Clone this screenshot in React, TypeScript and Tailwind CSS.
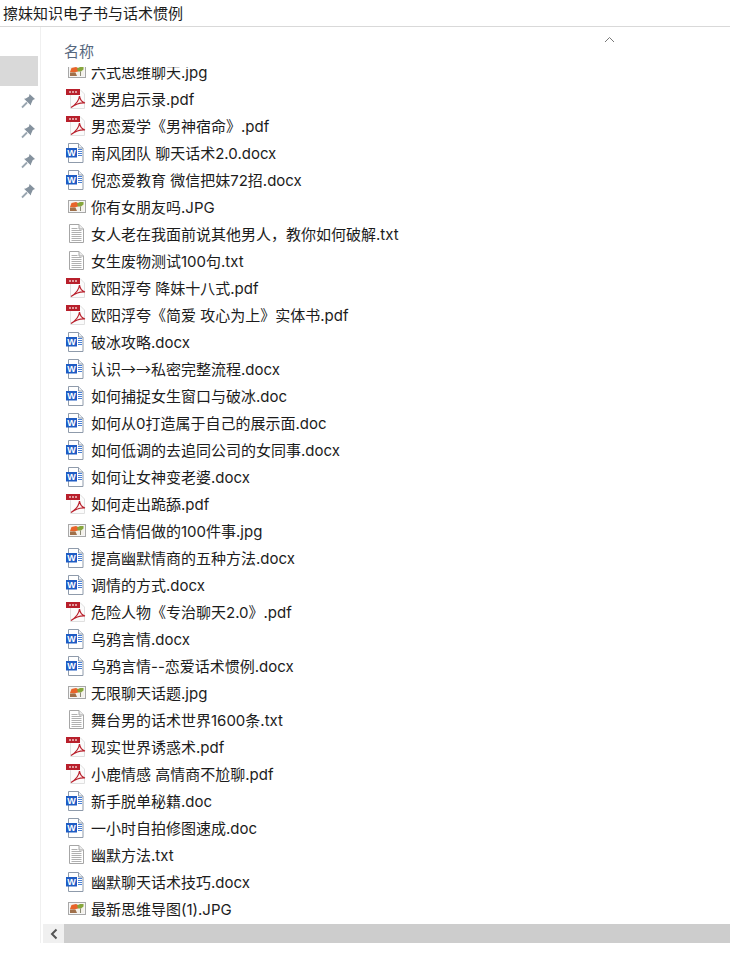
const FILES: [string, string][] = [
  ["jpg", "六式思维聊天.jpg"],
  ["pdf", "迷男启示录.pdf"],
  ["pdf", "男恋爱学《男神宿命》.pdf"],
  ["word", "南风团队 聊天话术2.0.docx"],
  ["word", "倪恋爱教育 微信把妹72招.docx"],
  ["jpg", "你有女朋友吗.JPG"],
  ["txt", "女人老在我面前说其他男人，教你如何破解.txt"],
  ["txt", "女生废物测试100句.txt"],
  ["pdf", "欧阳浮夸 降妹十八式.pdf"],
  ["pdf", "欧阳浮夸《简爱 攻心为上》实体书.pdf"],
  ["word", "破冰攻略.docx"],
  ["word", "认识→→私密完整流程.docx"],
  ["word", "如何捕捉女生窗口与破冰.doc"],
  ["word", "如何从0打造属于自己的展示面.doc"],
  ["word", "如何低调的去追同公司的女同事.docx"],
  ["word", "如何让女神变老婆.docx"],
  ["pdf", "如何走出跪舔.pdf"],
  ["jpg", "适合情侣做的100件事.jpg"],
  ["word", "提高幽默情商的五种方法.docx"],
  ["word", "调情的方式.docx"],
  ["pdf", "危险人物《专治聊天2.0》.pdf"],
  ["word", "乌鸦言情.docx"],
  ["word", "乌鸦言情--恋爱话术惯例.docx"],
  ["jpg", "无限聊天话题.jpg"],
  ["txt", "舞台男的话术世界1600条.txt"],
  ["pdf", "现实世界诱惑术.pdf"],
  ["pdf", "小鹿情感 高情商不尬聊.pdf"],
  ["word", "新手脱单秘籍.doc"],
  ["word", "一小时自拍修图速成.doc"],
  ["txt", "幽默方法.txt"],
  ["word", "幽默聊天话术技巧.docx"],
  ["jpg", "最新思维导图(1).JPG"],
];

function FileIcon({ type }: { type: string }) {
  if (type === "jpg") {
    return (
      <svg width="20" height="20" viewBox="0 0 20 20">
        <rect x="1.5" y="3.5" width="17" height="12" fill="#f6f6f6" stroke="#a8a8a8" />
        <rect x="3" y="5" width="14" height="9" fill="#f4f1ea" />
        <path d="M3 10 L4.5 6 L9 5 L12 6.5 L11 9.5 L7 10.5 Z" fill="#e8642a" />
        <path d="M10 6.5 L13 5 H16.5 V7.5 L14 9.5 L11 9.5 Z" fill="#86a63c" />
        <path d="M3 10.5 H8.5 L10 14 H3 Z" fill="#a0704a" />
        <path d="M13 9.5 H14 V14 H13 Z" fill="#8a8a76" />
      </svg>
    );
  }
  if (type === "pdf") {
    return (
      <svg width="22" height="22" viewBox="0 0 22 22">
        <path d="M5.5 1.5 H15 L19.5 6 V20.5 H5.5 Z" fill="#fbfbfb" stroke="#e0e0e0" />
        <rect x="1" y="1" width="14" height="6" fill="#b81f2b" />
        <path d="M4 4 H12" stroke="#edc4c4" strokeWidth="1.4" strokeDasharray="2 1" />
        <path d="M6 19.5 C10 17 14 12.5 14.5 8 C15 11.5 17 14 20 15 C15.5 14.5 11 16 6 19.5 Z" fill="#fdf1f1" stroke="#b81f2b" strokeWidth="1.2" />
      </svg>
    );
  }
  if (type === "word") {
    return (
      <svg width="22" height="22" viewBox="0 0 22 22">
        <path d="M3.5 1.5 H13.5 L18 6 V20.5 H3.5 Z" fill="#fff" stroke="#8f9bab" />
        <path d="M13.5 1.5 V6 H18" fill="#eef1f5" stroke="#8f9bab" />
        <rect x="1" y="6" width="11" height="9.5" fill="#1f5cc4" />
        <text x="6.5" y="14" textAnchor="middle" fontSize="9" fontWeight="700" fill="#fff" fontFamily="Liberation Sans, sans-serif">
          W
        </text>
        <path d="M13 7.5 H17 M13 9.5 H17 M13 11.5 H17 M13 13.5 H17" stroke="#4a80d4" strokeWidth="1" />
      </svg>
    );
  }
  return (
    <svg width="20" height="22" viewBox="0 0 20 22">
      <path d="M2.5 1.5 H12 L16.5 6 V19.5 H2.5 Z" fill="#fff" stroke="#a6a6a6" />
      <path d="M12 1.5 V6 H16.5" fill="#ececec" stroke="#a6a6a6" />
      <path d="M4.5 5.5 H10.5 M4.5 7.5 H14.5 M4.5 9.5 H14.5 M4.5 11.5 H14.5 M4.5 13.5 H14.5 M4.5 15.5 H14.5 M4.5 17.5 H14.5" stroke="#b0b0b0" strokeWidth="1" />
    </svg>
  );
}

function PinIcon() {
  return (
    <svg width="16" height="16" viewBox="0 0 16 16">
      <path d="M9.5 1 L15 6 L12.8 7 L11 11 L11 12.5 L4 5.8 L5.8 5.4 L9 3.4 Z" fill="#85929e" />
      <path d="M7 9.5 L2 14.5" stroke="#9aa6b0" strokeWidth="1.8" />
    </svg>
  );
}

// arrows come from the CJK font, Inter's are too narrow
function FileName({ name }: { name: string }) {
  const parts = name.split(/(→+)/);
  return (
    <span className="whitespace-nowrap leading-none">
      {parts.map((part, i) =>
        part.startsWith("→") ? (
          <span key={i} className="font-['Noto_Sans_CJK_SC']">
            {part}
          </span>
        ) : (
          part
        ),
      )}
    </span>
  );
}

export default function App() {
  return (
    <div
      className="flex h-[957px] w-[730px] flex-col overflow-hidden bg-white text-[15px] text-[#1c1c1c]"
      style={{ fontFamily: 'Inter, "Noto Sans CJK SC", sans-serif' }}
    >
      {/* Title bar */}
      <div className="flex h-[27px] shrink-0 items-center border-b border-[#d9d9d9] pl-[3px] leading-none">
        擦妹知识电子书与话术惯例
      </div>

      <div className="flex h-[916px] shrink-0">
        {/* Quick access */}
        <aside className="flex w-[41px] shrink-0 flex-col border-r border-[#f0f0f0] pt-[29px]">
          <div className="h-[30px] w-[38px] bg-[#d9d9d9]" />
          {[0, 1, 2, 3].map((i) => (
            <div key={i} className="flex h-[30px] w-[38px] items-center justify-end pr-[2px]">
              <PinIcon />
            </div>
          ))}
        </aside>

        {/* File list */}
        <main className="flex min-w-0 flex-1 flex-col">
          <div className="relative h-[40px] shrink-0 pl-[23px] pt-[15px] text-[15px] leading-[20px] text-[#56677e]">
            名称
            <svg className="absolute left-[563px] top-[9px]" width="11" height="7" viewBox="0 0 11 7">
              <path d="M1 6 L5.5 1.5 L10 6" fill="none" stroke="#777" strokeWidth="1" />
            </svg>
          </div>
          <div className="min-h-0 flex-1 overflow-hidden">
            <div className="-mt-[8.5px]">
              {FILES.map(([type, name]) => (
                <div key={name} className="flex h-[27px] items-center">
                  <span className="flex w-[50px] shrink-0 justify-end pr-[4px]">
                    <FileIcon type={type} />
                  </span>
                  <FileName name={name} />
                </div>
              ))}
            </div>
          </div>
          {/* Horizontal scrollbar */}
          <div className="flex h-[19px] shrink-0 pl-[2px]">
            <div className="flex w-[21px] items-center justify-center bg-[#f0f0f0]">
              <svg width="8" height="12" viewBox="0 0 8 12">
                <path d="M6.5 1.5 L2 6 L6.5 10.5" fill="none" stroke="#555" strokeWidth="2" />
              </svg>
            </div>
            <div className="flex-1 bg-[#cdcdcd]" />
          </div>
        </main>
      </div>
    </div>
  );
}
